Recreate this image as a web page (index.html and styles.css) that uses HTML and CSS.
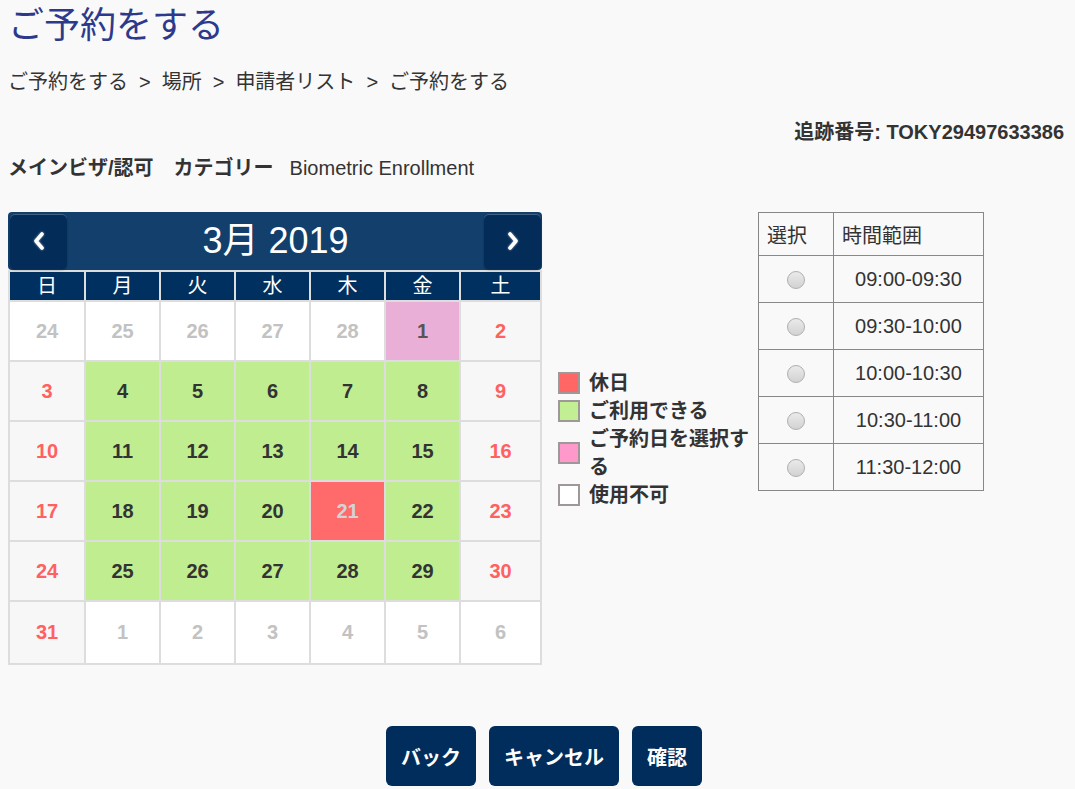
FILE: index.html
```html
<!DOCTYPE html>
<html lang="ja">
<head>
<meta charset="utf-8">
<title>ご予約をする</title>
<link rel="stylesheet" href="styles.css">
</head>
<body>
<div class="page">
  <h1 class="title">ご予約をする</h1>
  <nav class="crumbs">
    <span>ご予約をする</span><span class="sep">&gt;</span><span>場所</span><span class="sep">&gt;</span><span>申請者リスト</span><span class="sep">&gt;</span><span>ご予約をする</span>
  </nav>
  <div class="tracking">追跡番号: TOKY29497633386</div>
  <div class="category"><b class="cat-label">メインビザ/認可</b><b class="cat-label2">カテゴリー</b><span>Biometric Enrollment</span></div>

  <div class="booking">
    <div class="calendar">
      <div class="cal-head">
        <button class="nav" type="button" aria-label="前月">
          <svg width="14" height="20" viewBox="0 0 14 20"><path d="M10 3 L4 10 L10 17" fill="none" stroke="#fff" stroke-width="3.6" stroke-linecap="round" stroke-linejoin="round"/></svg>
        </button>
        <div class="month">3月 2019</div>
        <button class="nav" type="button" aria-label="翌月">
          <svg width="14" height="20" viewBox="0 0 14 20"><path d="M4 3 L10 10 L4 17" fill="none" stroke="#fff" stroke-width="3.6" stroke-linecap="round" stroke-linejoin="round"/></svg>
        </button>
      </div>
      <div class="cal-grid">
        <div class="wd">日</div><div class="wd">月</div><div class="wd">火</div><div class="wd">水</div><div class="wd">木</div><div class="wd">金</div><div class="wd">土</div>

        <div class="d o">24</div><div class="d o">25</div><div class="d o">26</div><div class="d o">27</div><div class="d o">28</div><div class="d s">1</div><div class="d w">2</div>

        <div class="d w">3</div><div class="d a">4</div><div class="d a">5</div><div class="d a">6</div><div class="d a">7</div><div class="d a">8</div><div class="d w">9</div>

        <div class="d w">10</div><div class="d a">11</div><div class="d a">12</div><div class="d a">13</div><div class="d a">14</div><div class="d a">15</div><div class="d w">16</div>

        <div class="d w">17</div><div class="d a">18</div><div class="d a">19</div><div class="d a">20</div><div class="d h">21</div><div class="d a">22</div><div class="d w">23</div>

        <div class="d w">24</div><div class="d a">25</div><div class="d a">26</div><div class="d a">27</div><div class="d a">28</div><div class="d a">29</div><div class="d w">30</div>

        <div class="d w">31</div><div class="d o">1</div><div class="d o">2</div><div class="d o">3</div><div class="d o">4</div><div class="d o">5</div><div class="d o">6</div>
      </div>
    </div>

    <ul class="legend">
      <li><span class="sw sw-holiday"></span><span>休日</span></li>
      <li><span class="sw sw-avail"></span><span>ご利用できる</span></li>
      <li><span class="sw sw-select"></span><span>ご予約日を選択する</span></li>
      <li><span class="sw sw-none"></span><span>使用不可</span></li>
    </ul>

    <table class="slots">
      <thead>
        <tr><th class="c-sel">選択</th><th class="c-time">時間範囲</th></tr>
      </thead>
      <tbody>
        <tr><td class="c-sel"><span class="radio"></span></td><td class="c-time">09:00-09:30</td></tr>
        <tr><td class="c-sel"><span class="radio"></span></td><td class="c-time">09:30-10:00</td></tr>
        <tr><td class="c-sel"><span class="radio"></span></td><td class="c-time">10:00-10:30</td></tr>
        <tr><td class="c-sel"><span class="radio"></span></td><td class="c-time">10:30-11:00</td></tr>
        <tr><td class="c-sel"><span class="radio"></span></td><td class="c-time">11:30-12:00</td></tr>
      </tbody>
    </table>
  </div>

  <div class="actions">
    <button class="btn" type="button">バック</button>
    <button class="btn" type="button">キャンセル</button>
    <button class="btn" type="button">確認</button>
  </div>
</div>
</body>
</html>
```

FILE: styles.css
```css
* { box-sizing: border-box; }

html, body {
  margin: 0;
  padding: 0;
  background: #f9f9f9;
}

body {
  font-family: "Liberation Sans", Arial, "Noto Sans CJK JP", sans-serif;
  font-size: 20px;
  color: #333;
}

.page {
  padding: 2px 8px 0 8px;
}

.title {
  margin: 0;
  font-size: 36px;
  line-height: 48px;
  font-weight: normal;
  color: #2d3a8c;
}

.crumbs {
  margin-top: 18px;
  line-height: 28px;
  color: #333;
}

.crumbs .sep {
  margin: 0 11px;
}

.tracking {
  margin-top: 22px;
  text-align: right;
  font-weight: bold;
  line-height: 28px;
  padding-right: 3px;
}

.category {
  margin-top: 8px;
  line-height: 28px;
}

.category .cat-label { margin-right: 20px; }
.category .cat-label2 { margin-right: 16px; }

.booking {
  margin-top: 30px;
  display: flex;
  align-items: flex-start;
}

/* calendar */
.calendar {
  width: 534px;
  flex: none;
}

.cal-head {
  height: 58px;
  background: #133f6d;
  border-radius: 4px;
  display: flex;
  align-items: center;
  justify-content: space-between;
  padding: 0 1px 0 2px;
}

.nav {
  width: 57px;
  height: 55px;
  border: none;
  border-radius: 5px;
  background: #032c58;
  box-shadow: inset 0 1px 0 rgba(255,255,255,0.25), 0 1px 2px rgba(0,0,0,0.35);
  display: flex;
  align-items: center;
  justify-content: center;
  padding: 0;
}

.nav svg { filter: drop-shadow(0 0 1px rgba(255,255,255,0.6)); }

.month {
  color: #fff;
  font-size: 36px;
  line-height: 40px;
}

.cal-grid {
  display: grid;
  grid-template-columns: 74px 73px 73px 73px 73px 73px 1fr;
  grid-template-rows: 28px repeat(5, 58px) 61px;
  gap: 2px;
  padding: 2px;
  background: #dddddd;
}

.wd {
  background: #003060;
  color: #fff;
  text-align: center;
  line-height: 28px;
}

.d {
  display: flex;
  align-items: center;
  justify-content: center;
  font-weight: bold;
  font-size: 20px;
}

.d.o { background: #fff; color: #c2c2c2; }
.d.w { background: #f7f7f7; color: #ff6161; }
.d.a { background: #c0ed90; color: #333; }
.d.s { background: #e9afd7; color: #555; }
.d.h { background: #ff6b6b; color: #d4d4d4; }

/* legend */
.legend {
  list-style: none;
  margin: 0 0 0 16px;
  padding: 0;
  width: 192px;
  align-self: center;
  font-weight: bold;
  line-height: 28px;
}

.legend li {
  display: flex;
  align-items: center;
}

.sw {
  flex: none;
  width: 22px;
  height: 22px;
  border: 2px solid #9e9898;
  margin-right: 9px;
}

.sw-holiday { background: #ff6666; }
.sw-avail { background: #c3ef94; }
.sw-select { background: #ff99cc; }
.sw-none { background: #fff; }

/* time slots */
.slots {
  margin-left: 8px;
  border-collapse: collapse;
  border: 1px solid #333;
  width: 226px;
  flex: none;
}

.slots th, .slots td {
  border: 1px solid #888;
  padding: 0;
}

.slots th {
  height: 43px;
  font-weight: normal;
  text-align: left;
  padding-left: 8px;
}

.slots td {
  height: 47px;
}

.slots .c-sel { width: 75px; }

.slots td.c-sel { text-align: center; }

.slots td.c-time { text-align: center; }

.radio {
  display: inline-block;
  vertical-align: middle;
  width: 18px;
  height: 18px;
  border-radius: 50%;
  border: 1px solid #b0b0b0;
  background: linear-gradient(#eaeaea, #d2d2d2);
}

/* actions */
.actions {
  margin-top: 61px;
  display: flex;
  justify-content: center;
  gap: 13px;
  padding-left: 13px;
}

.btn {
  height: 60px;
  padding: 0 15px;
  border: none;
  border-radius: 6px;
  background: #002d5b;
  color: #fff;
  font-family: inherit;
  font-size: 20px;
  font-weight: bold;
}
```
